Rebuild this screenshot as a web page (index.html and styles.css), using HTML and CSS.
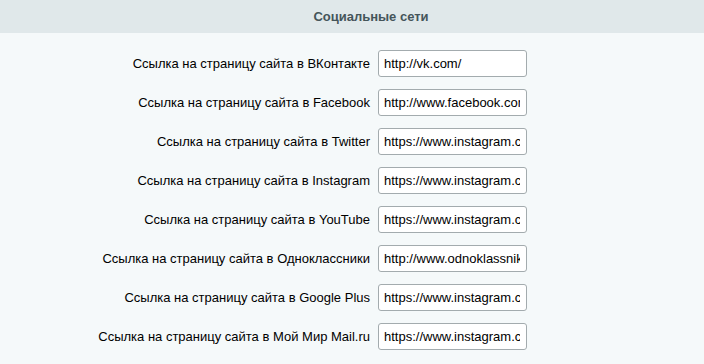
FILE: index.html
```html
<!DOCTYPE html>
<html>
<head>
  <title>Социальные сети</title>
  <link rel="stylesheet" href="styles.css">
</head>
<body>
  <div class="header">Социальные сети</div>
  <div class="form">
    <label class="label" for="vk">Ссылка на страницу сайта в ВКонтакте</label>
    <input class="field" type="text" id="vk" value="http://vk.com/">

    <label class="label" for="fb">Ссылка на страницу сайта в Facebook</label>
    <input class="field" type="text" id="fb" value="http://www.facebook.com/">

    <label class="label" for="tw">Ссылка на страницу сайта в Twitter</label>
    <input class="field" type="text" id="tw" value="https://www.instagram.com/">

    <label class="label" for="ig">Ссылка на страницу сайта в Instagram</label>
    <input class="field" type="text" id="ig" value="https://www.instagram.com/">

    <label class="label" for="yt">Ссылка на страницу сайта в YouTube</label>
    <input class="field" type="text" id="yt" value="https://www.instagram.com/">

    <label class="label" for="ok">Ссылка на страницу сайта в Одноклассники</label>
    <input class="field" type="text" id="ok" value="http://www.odnoklassniki.ru/">

    <label class="label" for="gp">Ссылка на страницу сайта в Google Plus</label>
    <input class="field" type="text" id="gp" value="https://www.instagram.com/">

    <label class="label" for="mm">Ссылка на страницу сайта в Мой Мир Mail.ru</label>
    <input class="field" type="text" id="mm" value="https://www.instagram.com/">
  </div>
</body>
</html>
```

FILE: styles.css
```css
body {
  margin: 0;
  padding: 0;
  background-color: #f5f9fa;
  font-family: "Liberation Sans", Arial, sans-serif;
  font-size: 13px;
  color: #000000;
}

.header {
  height: 33px;
  line-height: 33px;
  background-color: #e0e8ea;
  color: #45555a;
  font-weight: bold;
  font-size: 13px;
  text-align: center;
  padding-left: 38px;
}

.form {
  display: grid;
  grid-template-columns: 370px 149px;
  grid-auto-rows: 27px;
  column-gap: 8px;
  row-gap: 12px;
  padding-top: 17px;
}

.label {
  display: flex;
  align-items: center;
  justify-content: flex-end;
  white-space: nowrap;
}

.field {
  box-sizing: border-box;
  width: 149px;
  height: 27px;
  margin: 0;
  padding: 0 6px 0 5px;
  border: 1px solid #a3abae;
  border-radius: 3px;
  background-color: #ffffff;
  font-family: "Liberation Sans", Arial, sans-serif;
  font-size: 13px;
  color: #000000;
}
```
